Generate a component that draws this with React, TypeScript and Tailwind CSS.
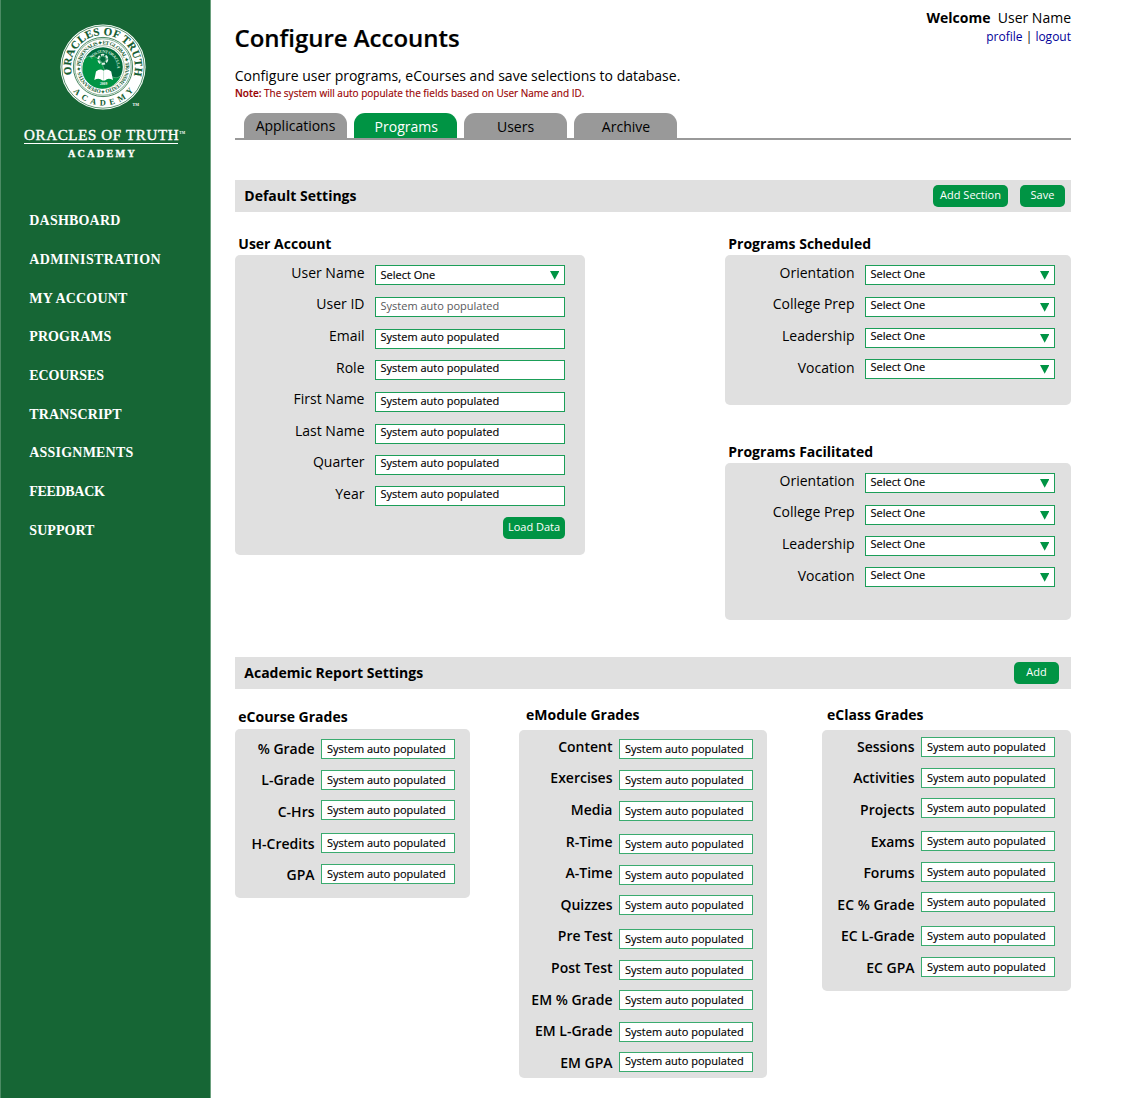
import React from "react";

type Entry = { label: string; labelY: number; fieldY: number; textY: number; muted?: boolean; select?: boolean };

const row = (label: string, labelY: number, fieldY: number, textY: number, extra: Partial<Entry> = {}): Entry => ({
  label,
  labelY,
  fieldY,
  textY,
  ...extra,
});

/* All y values are measured from the top edge of the panel; labelY and textY are baselines. */
const account: Entry[] = [
  row("User Name", 23, 10, 24, { select: true }),
  row("User ID", 54, 42, 55, { muted: true }),
  row("Email", 86, 74, 86),
  row("Role", 118, 105, 117),
  row("First Name", 149, 137, 150),
  row("Last Name", 181, 169, 181),
  row("Quarter", 212, 200, 212),
  row("Year", 244, 231, 243),
];

const programs: Entry[] = [
  row("Orientation", 23, 10, 23, { select: true }),
  row("College Prep", 54, 42, 54, { select: true }),
  row("Leadership", 86, 73, 85, { select: true }),
  row("Vocation", 118, 104, 116, { select: true }),
];

const eCourse: Entry[] = [
  row("% Grade", 25, 10, 24),
  row("L-Grade", 56, 41, 55),
  row("C-Hrs", 88, 71, 85),
  row("H-Credits", 120, 104, 118),
  row("GPA", 151, 135, 149),
];

const eModule: Entry[] = [
  row("Content", 22, 9, 23),
  row("Exercises", 53, 40, 54),
  row("Media", 85, 71, 85),
  row("R-Time", 117, 104, 118),
  row("A-Time", 148, 135, 149),
  row("Quizzes", 180, 165, 179),
  row("Pre Test", 211, 199, 213),
  row("Post Test", 243, 230, 244),
  row("EM % Grade", 275, 260, 274),
  row("EM L-Grade", 306, 292, 306),
  row("EM GPA", 338, 322, 335),
];

const eClass: Entry[] = [
  row("Sessions", 22, 7, 21),
  row("Activities", 53, 38, 52),
  row("Projects", 85, 68, 82),
  row("Exams", 117, 101, 115),
  row("Forums", 148, 132, 146),
  row("EC % Grade", 180, 162, 176),
  row("EC L-Grade", 211, 196, 210),
  row("EC GPA", 243, 227, 241),
];

const nav = [
  { text: "DASHBOARD", gap: 0, spacing: 0.2 },
  { text: "ADMINISTRATION", gap: 19, spacing: 0.36 },
  { text: "MY ACCOUNT", gap: 19, spacing: 0.2 },
  { text: "PROGRAMS", gap: 18, spacing: 0.06 },
  { text: "ECOURSES", gap: 19, spacing: -0.1 },
  { text: "TRANSCRIPT", gap: 19, spacing: 0.15 },
  { text: "ASSIGNMENTS", gap: 18, spacing: 0.2 },
  { text: "FEEDBACK", gap: 19, spacing: -0.32 },
  { text: "SUPPORT", gap: 19, spacing: 0.05 },
];

function Rows({ entries, wide = false }: { entries: Entry[]; wide?: boolean }) {
  return (
    <div className={wide ? "flex gap-[10.5px]" : "flex gap-[6.5px]"}>
      <div className="flex flex-1 flex-col items-end">
        {entries.map((e, i) => (
          <div
            key={e.label}
            className={
              wide
                ? "h-5 text-[14px] leading-5 whitespace-nowrap"
                : "h-5 text-[14px] leading-5 font-semibold whitespace-nowrap"
            }
            style={{ marginTop: e.labelY - 15 - (i ? entries[i - 1].labelY + 5 : 0) }}
          >
            {e.label}
          </div>
        ))}
      </div>
      <div className={wide ? "w-[190px]" : "w-[134px]"}>
        {entries.map((e, i) => (
          <div
            key={e.label}
            className={
              wide
                ? "flex h-5 items-start justify-between border border-[#1b9e58] bg-white pr-[5px] pl-[4.5px]"
                : "flex h-5 items-start border border-[#3aab6f] bg-white pl-[5px]"
            }
            style={{ marginTop: e.fieldY - (i ? entries[i - 1].fieldY + 20 : 0) }}
          >
            <span
              className={
                e.muted
                  ? "text-[11px] leading-4 whitespace-nowrap text-[#58595b]"
                  : "text-[11px] leading-4 whitespace-nowrap [-webkit-text-stroke:0.15px_#000]"
              }
              style={{ marginTop: e.textY - e.fieldY - 13 }}
            >
              {e.select ? "Select One" : "System auto populated"}
            </span>
            {e.select && (
              <svg className="mt-[5px] h-[9px] w-[9px]" viewBox="0 0 9 9">
                <path d="M0 0h9.4L4.7 8.8z" fill="#009444" />
              </svg>
            )}
          </div>
        ))}
      </div>
    </div>
  );
}

function Button({ children, className }: { children: React.ReactNode; className: string }) {
  return (
    <button
      className={
        "flex h-[22px] justify-center rounded-[5px] bg-[#009444] text-[11px] leading-[19px] whitespace-nowrap text-white " +
        className
      }
    >
      {children}
    </button>
  );
}

function Logo() {
  return (
    <svg className="-ml-px block h-[165px] w-[210px]" viewBox="0 0 210 165" fontFamily="'Liberation Serif', serif">
      <defs>
        <path id="outer" d="M71 67A32 32 0 1 1 135 67A32 32 0 0 1 103 99" transform="rotate(-14 103 67)" />
        <path id="lower" d="M64.4 67A38.6 38.6 0 0 0 141.6 67" />
        <path id="motto" d="M80.4 67A22.6 22.6 0 1 1 125.6 67A22.6 22.6 0 1 1 80.4 67" transform="rotate(2 103 67)" />
        <path id="inner" d="M88.8 67A14.2 14.2 0 0 1 117.2 67A14.2 14.2 0 0 1 103 81.2" transform="rotate(36 103 67)" />
      </defs>
      <circle cx="103" cy="67" r="42.6" fill="#fff" />
      <circle cx="103" cy="67" r="41.2" fill="none" stroke="#166635" strokeWidth="0.7" />
      <circle cx="103" cy="67" r="29.6" fill="none" stroke="#166635" strokeWidth="0.8" />
      <circle cx="103" cy="67" r="28.2" fill="none" stroke="#166635" strokeWidth="0.5" />
      <circle cx="103" cy="67" r="21.3" fill="none" stroke="#166635" strokeWidth="0.4" />
      <circle cx="103" cy="67" r="19.8" fill="#006b3c" />
      <path d="M85 59C90 52 101 58 103 66S116 82 121 75A19.8 19.8 0 1 1 85 59Z" fill="#009444" />
      <path d="M85 59C90 52 101 58 103 66S116 82 121 75" fill="none" stroke="#8fc9a7" strokeWidth="0.5" />
      <g fill="#145c31" fontWeight="700">
        <text fontSize="11" stroke="#145c31" strokeWidth="0.15">
          <textPath href="#outer" textLength="117" lengthAdjust="spacing">ORACLES OF TRUTH</textPath>
        </text>
        <text fontSize="8.4">
          <textPath href="#lower" startOffset="26.5" textLength="69" lengthAdjust="spacing">ACADEMY</textPath>
        </text>
        <text fontSize="5.4">
          <textPath href="#motto" textLength="140" lengthAdjust="spacing">
            PERSONALIS ✦ ET GLOBAL ✦ TRANSMUTATIO ✦ OPERANTES ✦
          </textPath>
        </text>
      </g>
      <text fontSize="4.2" fontWeight="700" fill="#d5ecdf">
        <textPath href="#inner" textLength="37" lengthAdjust="spacing">NOS SUNT ORACULA</textPath>
      </text>
      <circle cx="102.8" cy="59.3" r="4.6" fill="none" stroke="#e4f3ea" strokeWidth="1.8" strokeDasharray="3.4 1.4" />
      <circle cx="102.8" cy="59.3" r="3.2" fill="none" stroke="#7cc299" strokeWidth="0.6" />
      <path d="M94.3 80L96 71.5Q100 68 103.6 70.7Q107 68 111.2 71.5L113 80Q108 77.4 105 80.4H102.4Q99 77.4 94.3 80Z" fill="#fff" />
      <path d="M103.6 71.2V79.6" stroke="#8fc9a7" strokeWidth="0.5" />
      <text x="103.6" y="84.9" fontSize="3.6" fontWeight="700" fill="#fff" textAnchor="middle">2009</text>
      <text x="132.5" y="105.5" fontSize="4" fontWeight="700" fill="#fff">TM</text>
      <g fill="#fff">
        <text x="24" y="140.2" fontSize="15" textLength="154.6" lengthAdjust="spacing" stroke="#fff" strokeWidth="0.4">
          ORACLES OF TRUTH
        </text>
        <text x="179.3" y="133.5" fontSize="3.6" fontWeight="700">TM</text>
        <rect x="24" y="143" width="154" height="1" />
        <text x="67.9" y="156.5" fontSize="10.2" fontWeight="700" textLength="67" lengthAdjust="spacing" stroke="#fff" strokeWidth="0.3">
          ACADEMY
        </text>
      </g>
    </svg>
  );
}

function Sidebar() {
  return (
    <aside className="h-full w-[211px] shrink-0 border-r border-l border-r-[#6aa07d] border-l-[#4c8b64] bg-[#166635]">
      <Logo />
      <nav className="mt-[46px] ml-[28.3px] flex flex-col font-['Liberation_Serif',serif] text-[14px] leading-5 font-bold text-white">
        {nav.map((n) => (
          <a key={n.text} className="h-5 whitespace-nowrap" style={{ marginTop: n.gap, letterSpacing: n.spacing }}>
            {n.text}
          </a>
        ))}
      </nav>
    </aside>
  );
}

const tab = "h-[25px] w-[103px] rounded-t-[11px] text-center text-[14px]";

export default function App() {
  return (
    <div className="flex h-[1098px] w-[1134px] overflow-hidden bg-white font-['Open_Sans',sans-serif] text-[14px] leading-5 text-black">
      <Sidebar />
      <main className="ml-6 w-[836px]">
        <header className="flex h-[113px] justify-between">
          <div>
            <h1 className="mt-[22px] -ml-[0.5px] text-[24px] leading-8 font-semibold tracking-[-0.02px] [-webkit-text-stroke:0.2px_#000]">
              Configure Accounts
            </h1>
            <p className="mt-3 -ml-[0.3px] leading-5">Configure user programs, eCourses and save selections to database.</p>
            <p className="mt-0 text-[10px] leading-[14px] font-medium text-[#990000] [-webkit-text-stroke:0.15px_#990000]">
              <span className="font-semibold">Note:</span> The system will auto populate the fields based on User Name and ID.
            </p>
          </div>
          <div className="pt-2 text-right">
            <div>
              <b>Welcome</b>&nbsp; User Name
            </div>
            <div className="text-[12px] leading-[18px]">
              <a className="text-[#000099]">profile</a> | <a className="text-[#000099]">logout</a>
            </div>
          </div>
        </header>

        <div className="flex h-[27px] border-b-2 border-[#999] pl-[9px]">
          <div className={tab + " bg-[#999] leading-[25px]"}>Applications</div>
          <div className={tab + " ml-[7px] bg-[#009444] pl-[1.5px] leading-[27px] text-white"}>Programs</div>
          <div className={tab + " ml-[6.5px] bg-[#999] pl-px leading-[27px]"}>Users</div>
          <div className={tab + " ml-[7px] bg-[#999] pl-[2px] leading-[27px]"}>Archive</div>
        </div>

        <div className="mt-10 flex h-8 items-start bg-[#e0e0e0] pr-[6px] pl-[9.3px]">
          <h2 className="mt-[6px] flex-1 font-bold">Default Settings</h2>
          <Button className="mt-[5px] w-[75px]">Add Section</Button>
          <Button className="mt-[5px] ml-3 w-[45px]">Save</Button>
        </div>

        <div className="flex h-[445px] justify-between pt-[22px]">
          <section className="w-[349.5px]">
            <h3 className="mb-px ml-[3.3px] font-bold">User Account</h3>
            <div className="flex h-[300px] flex-col rounded-[5px] bg-[#e0e0e0] pr-[19.5px]">
              <Rows entries={account} wide />
              <Button className="mt-[11px] w-[62px] self-end">Load Data</Button>
            </div>
          </section>
          <div className="w-[346px]">
            <section>
              <h3 className="mb-px ml-[3.3px] font-bold">Programs Scheduled</h3>
              <div className="h-[150px] rounded-[5px] bg-[#e0e0e0] pr-4">
                <Rows entries={programs} wide />
              </div>
            </section>
            <section className="mt-[37px]">
              <h3 className="mb-px ml-[3.3px] font-bold">Programs Facilitated</h3>
              <div className="h-[157px] rounded-[5px] bg-[#e0e0e0] pr-4">
                <Rows entries={programs} wide />
              </div>
            </section>
          </div>
        </div>

        <div className="flex h-8 items-start bg-[#e0e0e0] pr-3 pl-[9.3px]">
          <h2 className="mt-[6px] flex-1 font-bold">Academic Report Settings</h2>
          <Button className="mt-[5px] w-[45px]">Add</Button>
        </div>

        <div className="flex items-start">
          <section className="mt-[18px] w-[235px]">
            <h3 className="mb-[2px] ml-[3.3px] font-bold">eCourse Grades</h3>
            <div className="h-[169px] rounded-[5px] bg-[#e0e0e0] pr-[15px]">
              <Rows entries={eCourse} />
            </div>
          </section>
          <section className="mt-4 ml-[49px] w-[248px]">
            <h3 className="mb-[5px] ml-[7px] font-bold">eModule Grades</h3>
            <div className="h-[348px] rounded-[5px] bg-[#e0e0e0] pr-[14px]">
              <Rows entries={eModule} />
            </div>
          </section>
          <section className="mt-4 ml-[55px] w-[249px]">
            <h3 className="mb-[5px] ml-[5px] font-bold">eClass Grades</h3>
            <div className="h-[261px] rounded-[5px] bg-[#e0e0e0] pr-4">
              <Rows entries={eClass} />
            </div>
          </section>
        </div>
      </main>
    </div>
  );
}
